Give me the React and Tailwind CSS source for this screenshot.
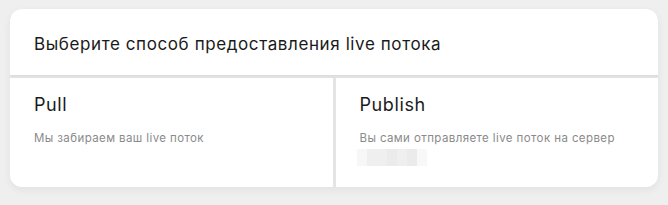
import React from 'react';

// --- Option cell ---
const Option = ({ title, text, blurred }) => (
  <div className="bg-white px-6 pt-[15px] h-[109px]">
    <h3 className="text-[18px] leading-[24px] tracking-[0.6px] text-[#1a1a1a]">{title}</h3>
    <p className="mt-[13px] text-[11.5px] leading-[16px] tracking-[0.4px] text-[#8a8a8a]">{text}</p>
    {blurred && (
      <div className="flex mt-[3px] -ml-[3px] h-[17px] w-[70px]">
        <div className="w-[10px] bg-[#f7f7f7]" />
        <div className="w-[20px] bg-[#efefef]" />
        <div className="w-[10px] bg-[#ebebeb]" />
        <div className="w-[10px] bg-[#efefef]" />
        <div className="w-[10px] bg-[#ebebeb]" />
        <div className="w-[10px] bg-[#f8f8f8]" />
      </div>
    )}
  </div>
);

const App = () => {
  return (
    <div
      className="w-[668px] h-[205px] bg-[#efefef] pt-[9px] px-[10px]"
      style={{ fontFamily: 'Inter, sans-serif' }}
    >
      <div className="rounded-[12px] overflow-hidden bg-[#e4e4e4] shadow-[0_3px_8px_rgba(0,0,0,0.06)]">
        {/* Header */}
        <div className="bg-white h-[66px] px-6 pt-[24px] shadow-[0_1px_3px_rgba(0,0,0,0.05)]">
          <h2 className="text-[17px] leading-[22px] tracking-[0.6px] text-[#1a1a1a]">
            Выберите способ предоставления live потока
          </h2>
        </div>

        {/* Options */}
        <div className="grid grid-cols-2 gap-[3px] mt-[3px]">
          <Option title="Pull" text="Мы забираем ваш live поток" />
          <Option title="Publish" text="Вы сами отправляете live поток на сервер" blurred />
        </div>
      </div>
    </div>
  );
};

export default App;
